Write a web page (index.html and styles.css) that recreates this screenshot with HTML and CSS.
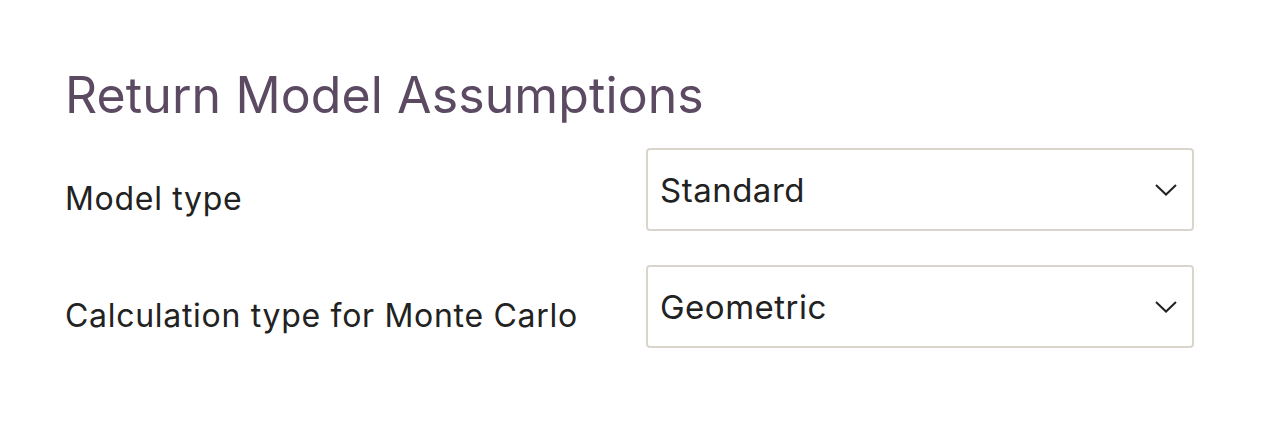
FILE: index.html
```html
<!DOCTYPE html>
<html lang="en">
<head>
<meta charset="utf-8">
<title>Return Model Assumptions</title>
<link rel="stylesheet" href="styles.css">
</head>
<body>
<main class="panel">
  <h1 class="title">Return Model Assumptions</h1>
  <div class="rows">
    <div class="row">
      <label class="label">Model type</label>
      <div class="select">
        <span class="value">Standard</span>
        <svg class="chev" width="24" height="14" viewBox="0 0 24 14" aria-hidden="true"><path d="M2 2 L12 11.5 L22 2" fill="none" stroke="#222" stroke-width="2"/></svg>
      </div>
    </div>
    <div class="row">
      <label class="label">Calculation type for Monte Carlo</label>
      <div class="select">
        <span class="value">Geometric</span>
        <svg class="chev" width="24" height="14" viewBox="0 0 24 14" aria-hidden="true"><path d="M2 2 L12 11.5 L22 2" fill="none" stroke="#222" stroke-width="2"/></svg>
      </div>
    </div>
  </div>
</main>
</body>
</html>
```

FILE: styles.css
```css
html, body {
  margin: 0;
  padding: 0;
  background: #ffffff;
}
body {
  font-family: Inter, "Liberation Sans", Arial, sans-serif;
  color: #222222;
}
.panel {
  padding: 65px 0 0 65px;
  width: 1130px;
}
.title {
  margin: 0;
  font-size: 50px;
  font-weight: 400;
  line-height: 60px;
  color: #5b4a62;
  letter-spacing: 0.1px;
}
.rows {
  margin-top: 23px;
  display: flex;
  flex-direction: column;
  gap: 34px;
}
.row {
  display: flex;
  align-items: flex-start;
}
.label {
  width: 581px;
  flex: none;
  font-size: 32px;
  line-height: 48px;
  padding-top: 27px;
  letter-spacing: 0.7px;
}
.select {
  width: 548px;
  height: 83px;
  box-sizing: border-box;
  border: 2px solid #d9d5cc;
  border-radius: 4px;
  display: flex;
  align-items: center;
  justify-content: space-between;
  padding: 0 14px 0 12px;
}
.value {
  font-size: 33px;
  line-height: 40px;
  letter-spacing: 0.5px;
}
.chev {
  display: block;
}
```
